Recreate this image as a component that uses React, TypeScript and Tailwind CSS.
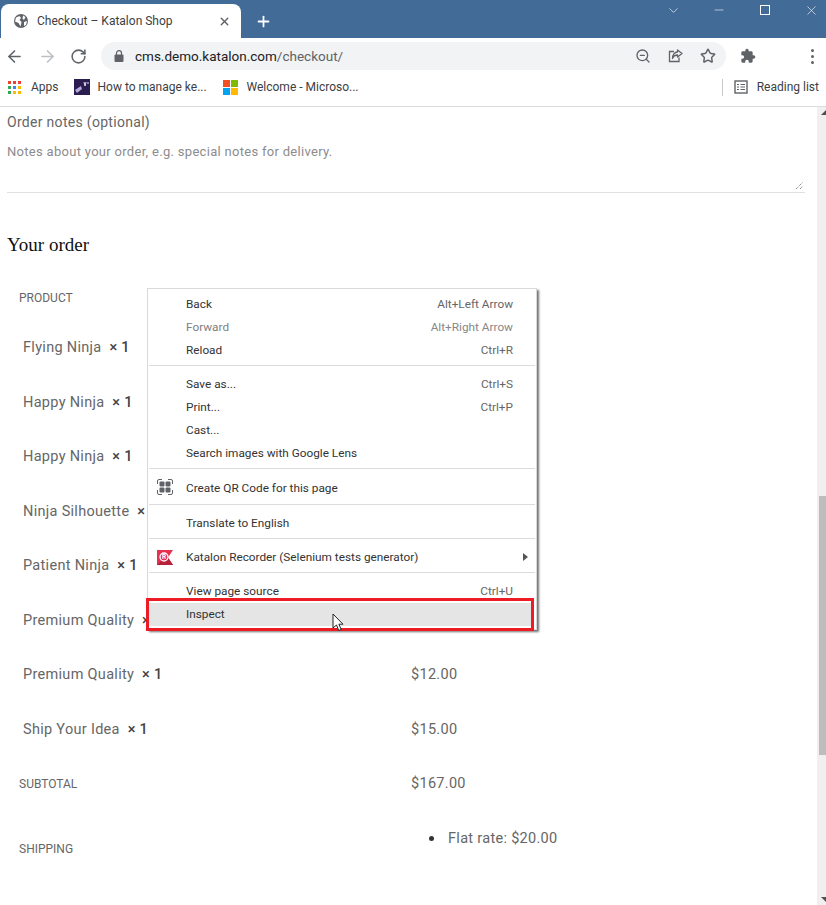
import { ArrowLeft, ArrowRight, ChevronDown, Minus, Plus, RotateCw, Star, X, ZoomOut } from 'lucide-react';

const PAGE_FONT = "font-['Roboto',sans-serif]";
const UI_FONT = "font-['Roboto',sans-serif]";

const ITEMS = [
  { name: 'Flying Ninja', h: 'h-[54px]' },
  { name: 'Happy Ninja', h: 'h-[55px]' },
  { name: 'Happy Ninja', h: 'h-[54px]' },
  { name: 'Ninja Silhouette', h: 'h-[55px]' },
  { name: 'Patient Ninja', h: 'h-[54px]' },
  { name: 'Premium Quality', h: 'h-[55px]' },
  { name: 'Premium Quality', h: 'h-[54px]', price: '$12.00' },
  { name: 'Ship Your Idea', h: 'h-[55px]', price: '$15.00' },
];

function MenuRow({ label, hint, disabled, active, tall }: { label: string; hint?: string; disabled?: boolean; active?: boolean; tall?: boolean }) {
  return (
    <div className={`flex items-center justify-between pl-[38px] pr-[23px] text-[11.8px] ${tall ? 'h-[25px]' : 'h-[23px]'} ${active ? 'mr-[5px] bg-[#e5e5e5]' : ''} ${disabled ? 'text-[#808080]' : 'text-[#333]'}`}>
      <span>{label}</span>
      {hint && <span className={disabled ? 'text-[#888]' : 'text-[#666]'}>{hint}</span>}
    </div>
  );
}

function Sep() {
  return <div className="mx-px mb-[7px] mt-[3px] h-px bg-[#dcdcdc]" />;
}

function GlobeIcon() {
  return (
    <svg width="14" height="14" viewBox="0 0 14 14" className="shrink-0">
      <circle cx="7" cy="7" r="7" fill="#5f6368" />
      <path d="M2 3.5 5.5 2 7 4 5.5 6 7.5 8 6.5 12.5 4.5 9 1 7.5ZM9 1.5 11.5 3 10 6 8.5 4.5ZM10 8l3-1-1 4-2 1Z" fill="#fff" />
    </svg>
  );
}

function AppsIcon() {
  const colors = ['#ea4335', '#ea4335', '#ea4335', '#34a853', '#4285f4', '#fbbc04', '#34a853', '#fbbc04', '#fbbc04'];
  return (
    <div className="grid w-[13px] grid-cols-3 gap-[2px]">
      {colors.map((c, i) => (
        <span key={i} className="h-[3px] w-[3px]" style={{ background: c }} />
      ))}
    </div>
  );
}

function BookmarkThumb() {
  return (
    <svg width="16" height="16" viewBox="0 0 16 16" className="shrink-0">
      <rect width="16" height="16" fill="#2b1d4f" />
      <path d="M1 11 7 7l1 3-5 4Z" fill="#b6a8d8" />
      <path d="M10 3l1 4 1-4M13 4h2" stroke="#e8e2f5" strokeWidth="1" fill="none" />
    </svg>
  );
}

function MsLogo() {
  return (
    <div className="grid h-[15px] w-[15px] shrink-0 grid-cols-2 gap-px">
      <span className="bg-[#f25022]" />
      <span className="bg-[#7fba00]" />
      <span className="bg-[#00a4ef]" />
      <span className="bg-[#ffb900]" />
    </div>
  );
}

function PuzzleIcon() {
  return (
    <svg width="16" height="16" viewBox="0 0 24 24" fill="#5f6368">
      <path d="M20.5 11H19V7a2 2 0 0 0-2-2h-4V3.5a2.5 2.5 0 0 0-5 0V5H4a2 2 0 0 0-2 2v3.8h1.5a2.7 2.7 0 0 1 0 5.4H2V20a2 2 0 0 0 2 2h3.8v-1.5a2.7 2.7 0 0 1 5.4 0V22H17a2 2 0 0 0 2-2v-4h1.5a2.5 2.5 0 0 0 0-5Z" />
    </svg>
  );
}

function LockIcon() {
  return (
    <svg width="10" height="12" viewBox="0 0 10 12" className="shrink-0">
      <path d="M2.5 5V3.2a2.5 2.5 0 0 1 5 0V5" fill="none" stroke="#5f6368" strokeWidth="1.2" />
      <rect x="0.5" y="4.5" width="9" height="7.5" rx="1" fill="#5f6368" />
    </svg>
  );
}

function ShareIcon() {
  return (
    <svg width="15" height="14" viewBox="0 0 15 14" fill="none" stroke="#5f6368" strokeWidth="1.3" className="ml-[17px] shrink-0">
      <path d="M6 2.5H1.500V12.500H11V8.500" />
      <path d="M9.500 1 14 4.500 9.500 8V6C7 6 5.500 7 4.500 9.500 4.500 6 6.500 3 9.500 3Z" strokeLinejoin="round" />
    </svg>
  );
}

function ReadingListIcon() {
  return (
    <svg width="14" height="14" viewBox="0 0 14 14" fill="none" stroke="#5f6368">
      <rect x="1" y="1" width="12" height="12" strokeWidth="1.4" />
      <path d="M3 4.500h2M6.500 4.500h4.500M3 7h2M6.500 7h4.500M3 9.500h2M6.500 9.500h4.500" strokeWidth="1.2" />
    </svg>
  );
}

function QrIcon() {
  return (
    <svg width="16" height="16" viewBox="0 0 16 16">
      <path d="M.5 5V2A1.500 1.500 0 0 1 2 .5h3M11 .5h3A1.500 1.500 0 0 1 15.500 2v3M15.500 11v3a1.500 1.500 0 0 1-1.500 1.500h-3M5 15.500H2A1.500 1.500 0 0 1 .5 14v-3" fill="none" stroke="#5f6368" />
      <rect x="2.5" y="2.5" width="5" height="5" rx="1" fill="#5f6368" />
      <rect x="8.5" y="2.5" width="5" height="5" rx="1" fill="#5f6368" />
      <rect x="2.5" y="8.5" width="5" height="5" rx="1" fill="#5f6368" />
      <rect x="8.5" y="8.5" width="5" height="5" rx="1" fill="#5f6368" />
    </svg>
  );
}

function KatalonIcon() {
  return (
    <svg width="16" height="15" viewBox="0 0 16 15">
      <path d="M0 0h16l-5 7.500 5 7.500H0Z" fill="#e5304f" />
      <path d="M0 15 9 6l2 1.500 5 7.500Z" fill="#b8213c" />
      <circle cx="7" cy="7" r="4" fill="#e5304f" stroke="#fff" strokeWidth="1.3" />
      <text x="7" y="9.2" textAnchor="middle" fontSize="6.5" fontWeight="700" fill="#fff" fontFamily="Roboto, sans-serif">R</text>
    </svg>
  );
}

function CursorIcon() {
  return (
    <svg width="14" height="20" viewBox="0 0 14 20">
      <path d="M1 1v14l3.500-3 2.200 5.500 2.500-1-2.300-5.300H11Z" fill="#fff" stroke="#222" strokeWidth="1" />
    </svg>
  );
}

function Browser() {
  return (
    <header className={`shrink-0 ${UI_FONT}`}>
      {/* 탭 줄 */}
      <div className="flex h-[38px] items-end overflow-hidden bg-[#426b98] pl-px">
        <div className="flex h-[34px] w-[240px] shrink-0 items-center gap-[9px] rounded-t-lg bg-white pl-[13px] pr-[10px]">
          <GlobeIcon />
          <span className="flex-1 truncate text-[12px] text-[#3c4043]">Checkout – Katalon Shop</span>
          <X size={13} strokeWidth={2.5} className="text-[#5f6368]" />
        </div>
        <div className="flex h-[34px] w-[44px] shrink-0 items-center justify-center text-white">
          <Plus size={17} strokeWidth={2.5} />
        </div>
        <div className="ml-auto mr-[-8px] flex h-full shrink-0 items-start text-white">
          <span className="flex h-[20px] w-[46px] items-center justify-center"><ChevronDown size={15} strokeWidth={1} /></span>
          <span className="flex h-[20px] w-[46px] items-center justify-center"><Minus size={14} strokeWidth={1} /></span>
          <span className="flex h-[20px] w-[46px] items-center justify-center"><span className="h-[10px] w-[10px] border border-white" /></span>
          <span className="flex h-[20px] w-[46px] items-center justify-center"><X size={15} strokeWidth={1} /></span>
        </div>
      </div>
      {/* 주소창 */}
      <div className="flex h-[36px] items-center bg-white pl-[5px] pr-[6px]">
        <ArrowLeft size={19} strokeWidth={2} className="text-[#5f6368]" />
        <ArrowRight size={19} strokeWidth={2} className="ml-[14px] text-[#bcc0c4]" />
        <RotateCw size={17} strokeWidth={2.2} className="ml-[13px] text-[#5f6368]" />
        <div className="ml-[14px] flex h-[28px] w-[625px] items-center rounded-full bg-[#f1f3f4] pl-[13px] pr-[10px]">
          <LockIcon />
          <span className="ml-[11px] flex-1 text-[13.5px] text-[#202124]">
            cms.demo.katalon.com<span className="text-[#5f6368]">/checkout/</span>
          </span>
          <ZoomOut size={16} className="text-[#5f6368]" />
          <ShareIcon />
          <Star size={16} strokeWidth={2.2} className="ml-[17px] text-[#5f6368]" />
        </div>
        <div className="ml-[14px]"><PuzzleIcon /></div>
        <div className="ml-auto mr-[6px] flex flex-col gap-[3px]">
          <span className="h-[3px] w-[3px] rounded-full bg-[#5f6368]" />
          <span className="h-[3px] w-[3px] rounded-full bg-[#5f6368]" />
          <span className="h-[3px] w-[3px] rounded-full bg-[#5f6368]" />
        </div>
      </div>
      {/* 북마크 바 */}
      <div className="flex h-[33px] items-center border-b border-[#dadce0] pb-[6px] pl-[8px] text-[12px] text-[#3c4043]">
        <AppsIcon />
        <span className="ml-[10px]">Apps</span>
        <span className="ml-[15px]"><BookmarkThumb /></span>
        <span className="ml-[8px] w-[125px]">How to manage ke...</span>
        <MsLogo />
        <span className="ml-[9px]">Welcome - Microso...</span>
        <span className="ml-auto h-[17px] w-px bg-[#c8c8c8]" />
        <span className="ml-[11px]"><ReadingListIcon /></span>
        <span className="ml-[9px] pr-[7px]">Reading list</span>
      </div>
    </header>
  );
}

function ContextMenu() {
  return (
    <div className={`absolute left-[147px] top-[181px] w-[390px] border border-[#d9d9d9] bg-white pt-[4px] tracking-normal shadow-[2px_2px_2px_rgba(0,0,0,0.55)] ${UI_FONT}`}>
      <MenuRow label="Back" hint="Alt+Left Arrow" />
      <MenuRow label="Forward" hint="Alt+Right Arrow" disabled />
      <MenuRow label="Reload" hint="Ctrl+R" />
      <Sep />
      <MenuRow label="Save as..." hint="Ctrl+S" />
      <MenuRow label="Print..." hint="Ctrl+P" />
      <MenuRow label="Cast..." />
      <MenuRow label="Search images with Google Lens" />
      <Sep />
      <div className="relative">
        <span className="absolute left-[9px] top-[3px]"><QrIcon /></span>
        <MenuRow label="Create QR Code for this page" tall />
      </div>
      <Sep />
      <MenuRow label="Translate to English" />
      <Sep />
      <div className="relative">
        <span className="absolute left-[9px] top-[4px]"><KatalonIcon /></span>
        <MenuRow label="Katalon Recorder (Selenium tests generator)" />
        <span className="absolute right-[8px] top-[7px] h-0 w-0 border-y-[4px] border-l-[5px] border-y-transparent border-l-[#555]" />
      </div>
      <Sep />
      <MenuRow label="View page source" hint="Ctrl+U" />
      <MenuRow label="Inspect" active />
      <div className="h-[3px]" />
    </div>
  );
}

export default function App() {
  return (
    <div className="flex h-[905px] w-[826px] flex-col overflow-hidden bg-white">
      <Browser />
      <div className="flex min-h-0 flex-1">
        <main className={`relative min-w-0 flex-1 overflow-hidden pl-[7px] tracking-[0.3px] text-[#666] ${PAGE_FONT}`}>
          <label className="mt-[5px] block h-[20px] text-[14px] leading-[20px]">Order notes (optional)</label>
          <div className="relative mr-[12px] h-[61px] border-b border-[#e0e0e0] pt-[10px] text-[13px] leading-[20px] text-[#8c8c8c]">
            Notes about your order, e.g. special notes for delivery.
            <svg width="9" height="9" viewBox="0 0 9 9" className="absolute bottom-[2px] right-[1px]">
              <path d="M1 8 8 1M5 8 8 5" stroke="#666" strokeWidth="1" strokeDasharray="1 1" />
            </svg>
          </div>
          <h3 className="mt-[40px] h-[24px] font-['Liberation_Serif',serif] text-[19px] leading-[24px] tracking-normal text-[#111]">Your order</h3>
          <div className="mt-[29px] flex h-[24px] items-center pl-[12px] text-[12px] uppercase tracking-normal">Product</div>
          <div className="mt-[11px] flex flex-col pl-[16px]">
            {ITEMS.map((item, i) => (
              <div key={i} className={`flex items-center ${item.h}`}>
                <div className="w-[388px] text-[14.5px]">
                  {item.name} <span className="ml-[4px] font-medium text-[#444]">× 1</span>
                </div>
                {item.price && <div className="text-[14.5px]">{item.price}</div>}
              </div>
            ))}
          </div>
          <div className="flex h-[53px] items-center pl-[12px]">
            <span className="w-[392px] text-[12px] uppercase tracking-normal">Subtotal</span>
            <span className="text-[14.5px]">$167.00</span>
          </div>
          <div className="flex items-start pl-[12px]">
            <span className="mt-[30px] w-[392px] text-[12px] uppercase tracking-normal">Shipping</span>
            <ul className="mt-[18px] pl-[18px] text-[14.5px]">
              <li className="flex items-center gap-[14px]">
                <span className="h-[5px] w-[5px] rounded-full bg-[#333]" />
                Flat rate: $20.00
              </li>
            </ul>
          </div>
          <ContextMenu />
          {/* 강조 박스 & 커서 */}
          <div className="pointer-events-none absolute left-[146px] top-[491px] h-[33px] w-[388px] border-[3px] border-[#ed1c24]" />
          <span className="absolute left-[332px] top-[506px]"><CursorIcon /></span>
        </main>
        <aside className="relative w-[9px] shrink-0 bg-[#f0f0f0]">
          <span className="absolute right-0 top-[3px] h-0 w-0 border-b-[5px] border-l-[5px] border-b-[#505050] border-l-transparent" />
          <div className="absolute left-[2px] right-0 top-[389px] h-[259px] bg-[#bdbdbd]" />
          <span className="absolute bottom-[3px] right-0 h-0 w-0 border-t-[5px] border-l-[5px] border-t-[#505050] border-l-transparent" />
        </aside>
      </div>
    </div>
  );
}
